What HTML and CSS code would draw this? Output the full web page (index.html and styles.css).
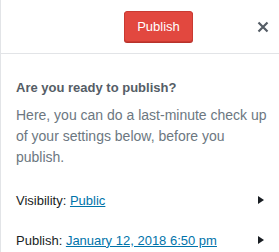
FILE: index.html
```html
<!DOCTYPE html>
<html lang="en">
<head>
    <meta charset="UTF-8">
    <title>Publish panel</title>
    <link rel="stylesheet" href="styles.css">
</head>
<body>
<div class="topbar"></div>
<div class="panel">
    <div class="panel-header">
        <button class="btn-publish">Publish</button>
        <button class="btn-close" aria-label="Close">
            <svg width="12" height="12" viewBox="0 0 12 12">
                <path d="M1.5 1.5L10.5 10.5M10.5 1.5L1.5 10.5" stroke="#555d66" stroke-width="2.2"/>
            </svg>
        </button>
    </div>
    <div class="panel-body">
        <h2 class="title">Are you ready to publish?</h2>
        <p class="intro">Here, you can do a last-minute check up of your settings below, before you publish.</p>
        <ul class="settings">
            <li>
                <span class="label">Visibility: <a href="#">Public</a></span>
                <span class="arrow"></span>
            </li>
            <li>
                <span class="label">Publish: <a href="#">January 12, 2018 6:50 pm</a></span>
                <span class="arrow"></span>
            </li>
        </ul>
    </div>
</div>
</body>
</html>
```

FILE: styles.css
```css
* {
    margin: 0;
    padding: 0;
    box-sizing: border-box;
}

html, body {
    height: 100%;
}

body {
    font-family: "Liberation Sans", Arial, sans-serif;
    background: #fff;
    display: flex;
    flex-direction: column;
}

ul {
    list-style: none
}

.topbar {
    height: 4px;
    background: #32373c;
}

.panel {
    flex: 1;
    border-left: 1px solid #e2e4e7;
}

.panel-header {
    height: 54px;
    display: flex;
    align-items: center;
    justify-content: flex-end;
    border-bottom: 1px solid #e2e4e7;
    padding-right: 4px;
}

.btn-publish {
    width: 69px;
    height: 31px;
    background: #e2483f;
    border: 1px solid #c93a32;
    border-radius: 3px;
    box-shadow: 0 1px 0 #b8322b;
    color: #fff;
    font-family: inherit;
    font-size: 13px;
    margin-right: 58px;
}

.btn-close {
    width: 24px;
    height: 24px;
    border: 0;
    background: none;
    display: flex;
    align-items: center;
    justify-content: center;
}

.panel-body {
    padding: 25px 12px 0 15px;
}

.title {
    font-size: 13px;
    line-height: 18px;
    font-weight: bold;
    color: #555d66;
}

.intro {
    margin-top: 8px;
    font-size: 14px;
    line-height: 21px;
    color: #6c7781;
}

.settings {
    margin-top: 12px;
}

.settings li {
    height: 40px;
    display: flex;
    align-items: center;
    justify-content: space-between;
    font-size: 13px;
    color: #191e23;
}

.settings a {
    color: #0073aa;
}

.arrow {
    width: 0;
    height: 0;
    border-top: 4px solid transparent;
    border-bottom: 4px solid transparent;
    border-left: 6px solid #191e23;
    margin-right: 3px;
}
```
